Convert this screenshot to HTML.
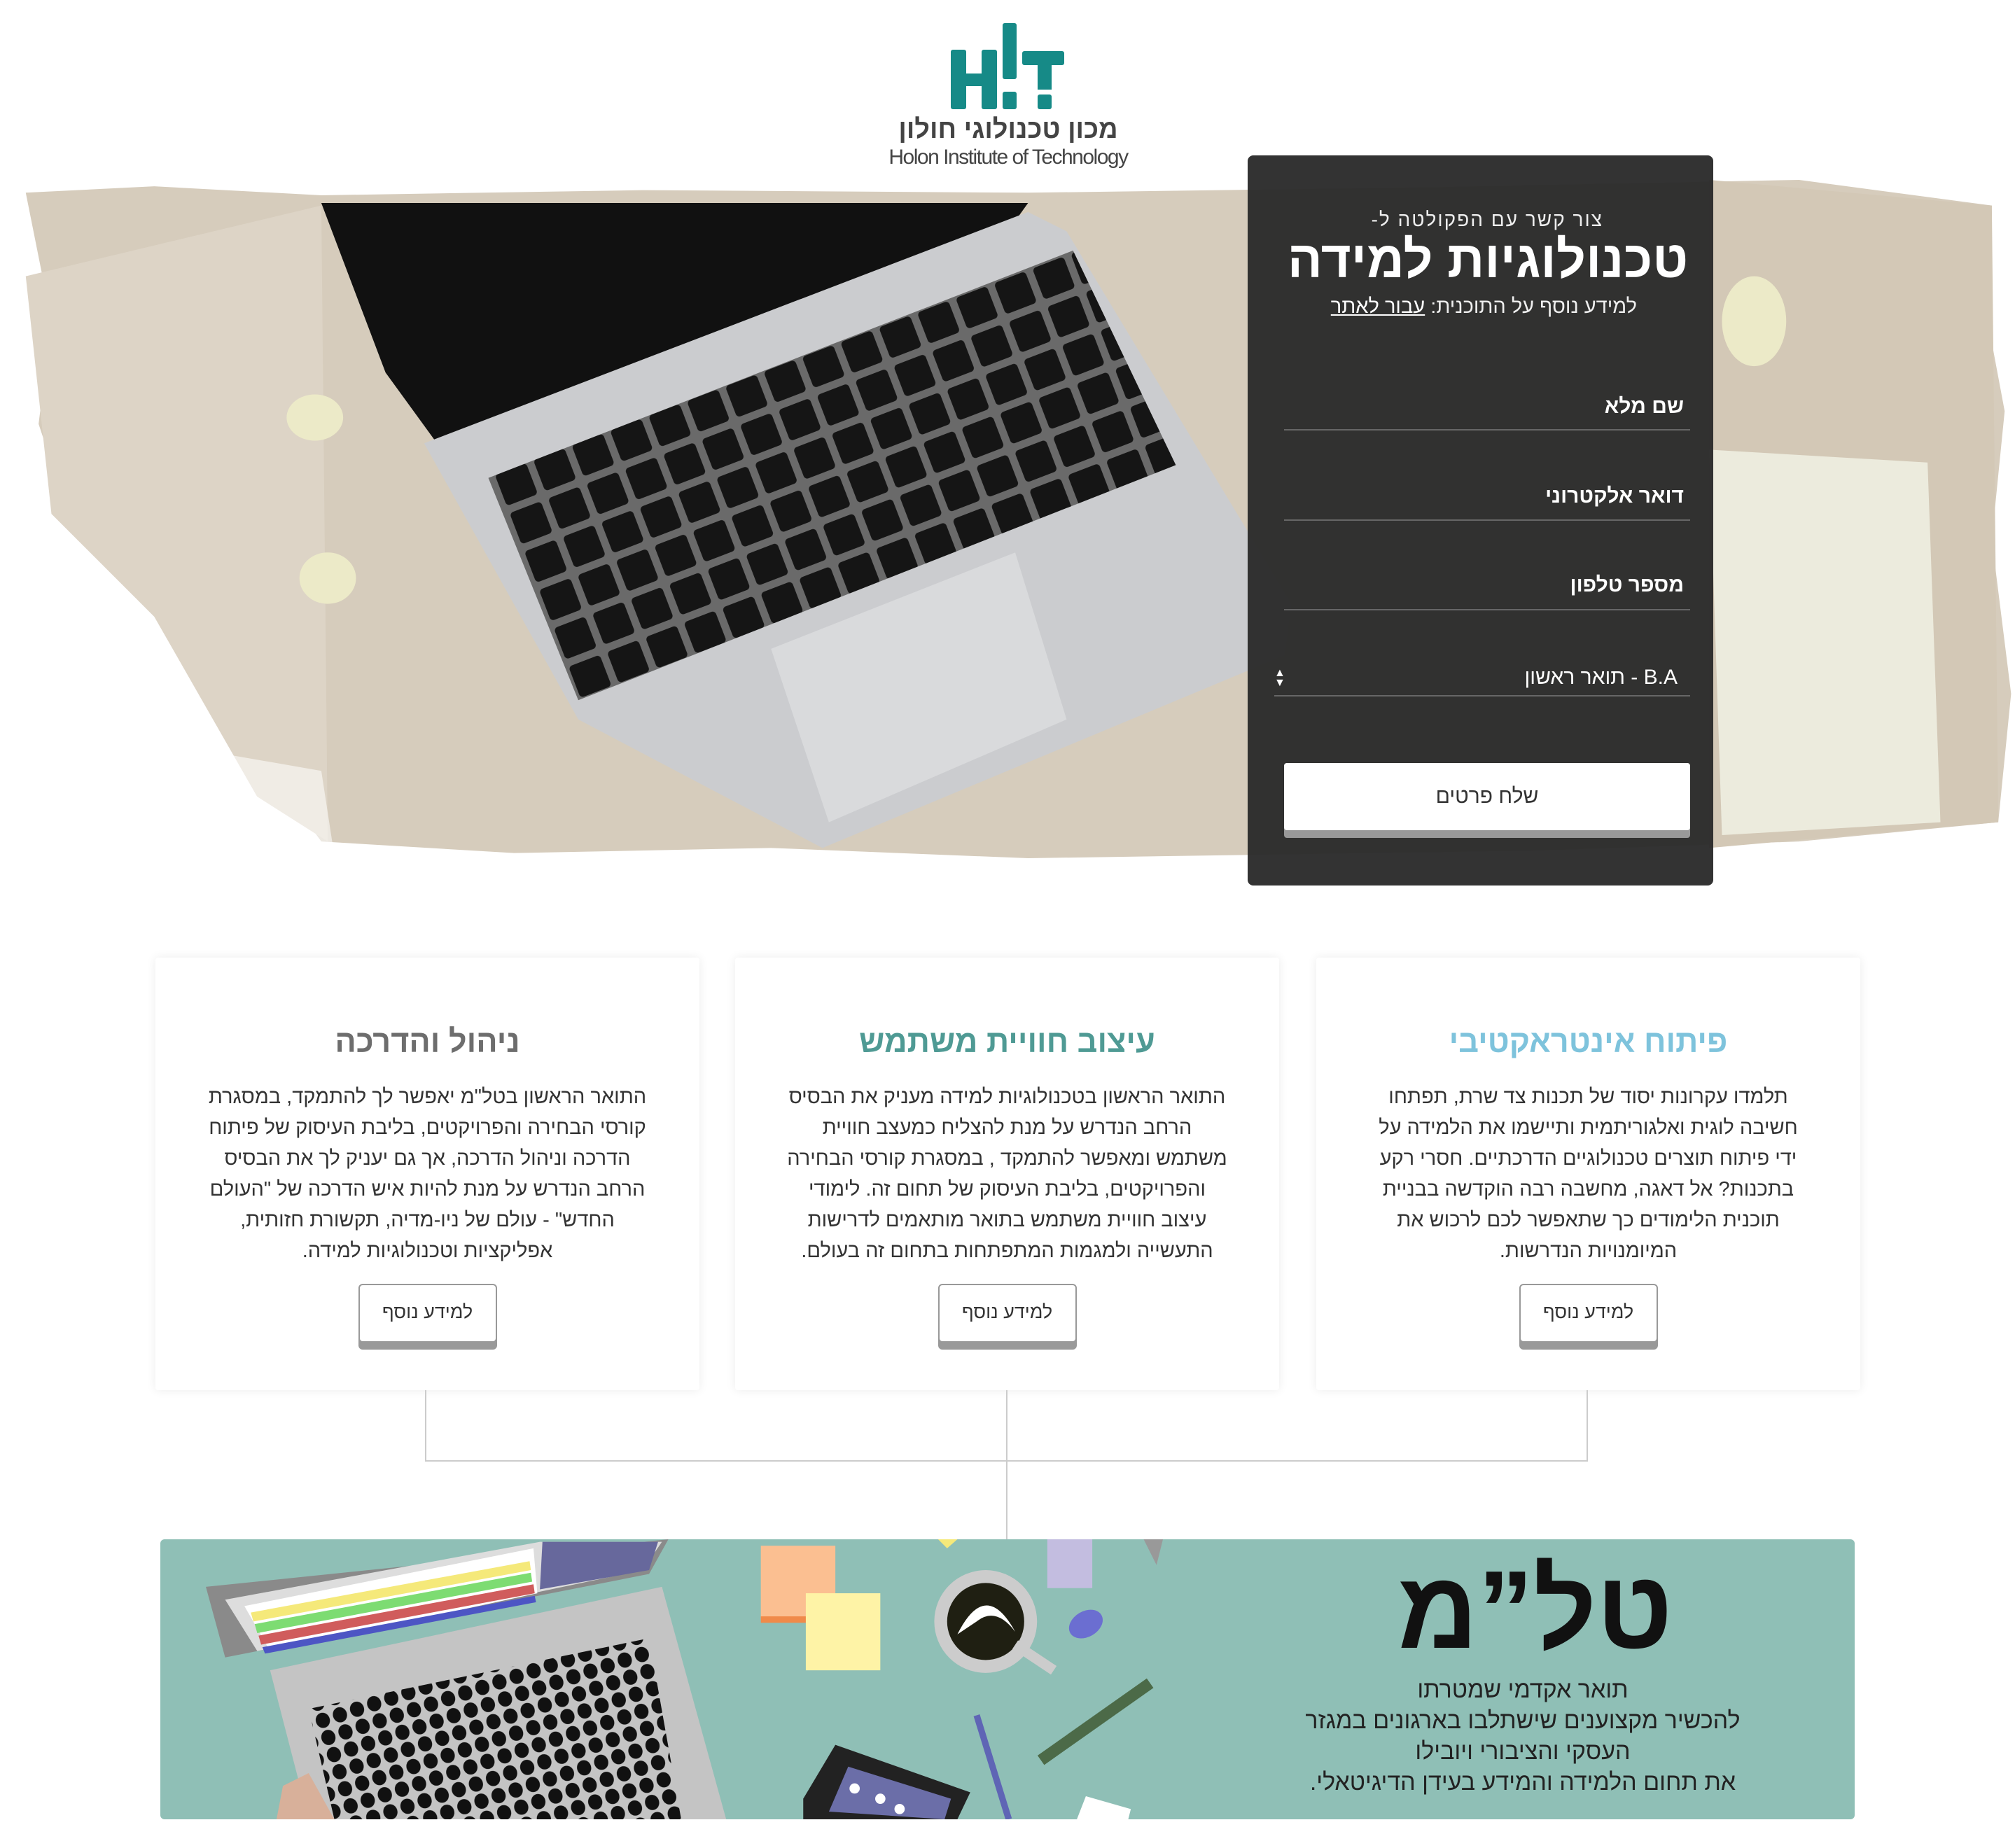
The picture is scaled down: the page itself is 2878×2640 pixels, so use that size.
<!DOCTYPE html>
<html lang="he" dir="rtl"><head><meta charset="utf-8">
<style>
*{margin:0;padding:0;box-sizing:border-box}
html,body{width:2878px;height:2640px;background:#fff;overflow:hidden}
body{position:relative;font-family:"Liberation Sans","DejaVu Sans",sans-serif;color:#333}
.abs{position:absolute}
.card{position:absolute;top:1368px;width:777px;height:618px;background:#fff;box-shadow:0 0 14px rgba(0,0,0,.08);border-radius:4px;text-align:center}
.card h2{position:absolute;top:94px;left:0;right:0;font-size:45px;font-weight:bold}
.card p{position:absolute;top:177px;left:0;right:0;font-size:29px;line-height:44px;color:#333}
.btn{position:absolute;top:466px;left:50%;margin-left:-99px;width:198px;height:84px;border:2px solid #999;border-radius:6px;background:#fff;box-shadow:0 10px 0 #999;font-size:27px;line-height:76px;color:#333}
.lbl{position:absolute;right:473px;font-size:30px;color:#fff;font-weight:bold}
.ln{position:absolute;left:1834px;width:580px;height:2px;background:#666}
.bt{position:absolute;font-size:34px;color:#222;text-align:center;width:900px;left:1725px}
</style></head><body>

<svg class="abs" style="left:0;top:0" width="2878" height="2640" viewBox="0 0 1568 1438.4">
<defs>
<pattern id="keys" width="32" height="32" patternUnits="userSpaceOnUse" patternTransform="rotate(-21)">
<rect width="32" height="32" fill="#6a6a6a"/><rect x="3" y="3" width="26" height="26" rx="3" fill="#151515"/>
</pattern>
</defs>
<path d="M20 150 L120 145 L250 152 L500 148 L800 150 L1100 146 L1400 140 L1550 160 L1545 240 L1560 320 L1550 420 L1565 540 L1555 640 L1400 655 L1200 662 L1000 665 L800 668 L600 660 L400 664 L250 655 L210 600 L180 520 L120 470 L60 420 L30 330 L40 250 Z" fill="#d6ccbc"/>
<path d="M20 215 L250 160 L255 655 L200 620 L120 480 L40 400 Z" fill="#ddd4c6"/>
<path d="M1330 140 L1550 160 L1555 640 L1330 660 Z" fill="#d3c8b6"/>
<path d="M250 158 L800 158 L790 172 L340 345 L300 290 Z" fill="#111"/>
<path d="M330 345 L800 165 L830 180 L1005 470 L1000 510 L640 660 L450 560 Z" fill="#cbcccf"/>
<path d="M380 372 L835 195 L915 362 L450 545 Z" fill="url(#keys)"/>
<path d="M600 505 L790 430 L830 560 L645 640 Z" fill="#d9dadc"/>
<path d="M1330 350 L1500 360 L1510 640 L1340 650 Z" fill="#ecebdd"/>
<ellipse cx="245" cy="325" rx="22" ry="18" fill="#eceac8"/>
<ellipse cx="255" cy="450" rx="22" ry="20" fill="#eceac8"/>
<ellipse cx="1365" cy="250" rx="25" ry="35" fill="#eceac8"/>
<path d="M20 560 L250 600 L260 665 L150 640 Z" fill="#fff" opacity=".55"/>
</svg>

<div class="abs" style="left:1358px;top:33px;width:162px;height:123px">
<svg width="162" height="123" viewBox="0 0 162 123">
<rect x="0" y="38" width="22" height="85" rx="3" fill="#168a87"/>
<rect x="44" y="38" width="22" height="85" rx="3" fill="#168a87"/>
<rect x="0" y="72" width="66" height="18" fill="#168a87"/>
<rect x="74" y="0" width="20" height="80" rx="3" fill="#168a87"/>
<rect x="74" y="98" width="20" height="25" rx="3" fill="#168a87"/>
<rect x="102" y="40" width="60" height="20" rx="3" fill="#168a87"/>
<rect x="124" y="40" width="20" height="55" fill="#168a87"/>
<rect x="124" y="102" width="20" height="21" rx="3" fill="#168a87"/>
</svg></div>
<div class="abs" style="left:1270px;top:164px;width:340px;text-align:center;font-size:38px;font-weight:bold;color:#444">מכון טכנולוגי חולון</div>
<div class="abs" dir="ltr" style="left:1220px;top:208px;width:440px;text-align:center;font-size:30px;color:#444;letter-spacing:-1.5px;white-space:nowrap">Holon Institute of Technology</div>

<div class="abs" style="left:1782px;top:222px;width:665px;height:1043px;background:rgba(40,40,40,.95);border-radius:8px"></div>
<div class="abs" style="left:1900px;top:298px;width:390px;font-size:28px;color:#eee;text-align:right;letter-spacing:2px;white-space:nowrap">צור קשר עם הפקולטה ל-</div>
<div class="abs" style="left:1810px;top:328px;width:630px;text-align:center;font-size:74px;font-weight:bold;color:#fff">טכנולוגיות למידה</div>
<div class="abs" style="left:1782px;top:422px;width:556px;text-align:right;font-size:29px;color:#eee">למידע נוסף על התוכנית: <span style="text-decoration:underline;color:#fff">עבור לאתר</span></div>
<div class="lbl" style="top:564px">שם מלא</div><div class="ln" style="top:613px"></div>
<div class="lbl" style="top:692px">דואר אלקטרוני</div><div class="ln" style="top:742px"></div>
<div class="lbl" style="top:819px">מספר טלפון</div><div class="ln" style="top:870px"></div>
<div class="lbl" style="top:951px;right:482px;font-weight:normal">B.A - תואר ראשון</div>
<div class="abs" style="left:1820px;top:955px;font-size:16px;color:#fff;line-height:14px">▲<br>▼</div>
<div class="ln" style="top:993px;left:1820px;width:594px"></div>
<div class="abs" style="left:1834px;top:1090px;width:580px;height:96px;background:#fff;border-radius:4px;box-shadow:0 11px 0 #999;text-align:center;font-size:30px;line-height:96px;color:#333">שלח פרטים</div>

<div class="card" style="left:222px"><h2 style="color:#6d6d6d">ניהול והדרכה</h2>
<p>התואר הראשון בטל"מ יאפשר לך להתמקד, במסגרת<br>קורסי הבחירה והפרויקטים, בליבת העיסוק של פיתוח<br>הדרכה וניהול הדרכה, אך גם יעניק לך את הבסיס<br>הרחב הנדרש על מנת להיות איש הדרכה של "העולם<br>החדש" - עולם של ניו-מדיה, תקשורת חזותית,<br>אפליקציות וטכנולוגיות למידה.</p><div class="btn">למידע נוסף</div></div>
<div class="card" style="left:1050px"><h2 style="color:#4f9a94">עיצוב חוויית משתמש</h2>
<p>התואר הראשון בטכנולוגיות למידה מעניק את הבסיס<br>הרחב הנדרש על מנת להצליח כמעצב חוויית<br>משתמש ומאפשר להתמקד , במסגרת קורסי הבחירה<br>והפרויקטים, בליבת העיסוק של תחום זה. לימודי<br>עיצוב חוויית משתמש בתואר מותאמים לדרישות<br>התעשייה ולמגמות המתפתחות בתחום זה בעולם.</p><div class="btn">למידע נוסף</div></div>
<div class="card" style="left:1880px"><h2 style="color:#7ec3dc">פיתוח אינטראקטיבי</h2>
<p>תלמדו עקרונות יסוד של תכנות צד שרת, תפתחו<br>חשיבה לוגית ואלגוריתמית ותיישמו את הלמידה על<br>ידי פיתוח תוצרים טכנולוגיים הדרכתיים. חסרי רקע<br>בתכנות? אל דאגה, מחשבה רבה הוקדשה בבניית<br>תוכנית הלימודים כך שתאפשר לכם לרכוש את<br>המיומנויות הנדרשות.</p><div class="btn">למידע נוסף</div></div>

<div class="abs" style="left:607px;top:1986px;width:2px;height:102px;background:#ccc"></div>
<div class="abs" style="left:1437px;top:1986px;width:2px;height:213px;background:#ccc"></div>
<div class="abs" style="left:2266px;top:1986px;width:2px;height:102px;background:#ccc"></div>
<div class="abs" style="left:607px;top:2086px;width:1661px;height:2px;background:#ccc"></div>

<div class="abs" style="left:229px;top:2199px;width:2420px;height:400px;background:#8fbfb6;border-radius:6px;overflow:hidden">
<svg width="2420" height="400" viewBox="125 1198 1318 218">
<defs><pattern id="bk" width="14" height="14" patternUnits="userSpaceOnUse" patternTransform="rotate(-18)"><rect width="14" height="14" fill="#c4c4c4"/><ellipse cx="7" cy="7" rx="5.5" ry="6" fill="#111"/></pattern></defs>
<path d="M160 1235 L520 1198 L505 1225 L175 1290 Z" fill="#8a8a8a"/>
<path d="M175 1245 L420 1200 L515 1200 L500 1222 L200 1285 Z" fill="#ddd"/>
<path d="M190 1250 L415 1205 L418 1240 L210 1285 Z" fill="#fff"/>
<path d="M195 1255 L412 1215 L413 1222 L197 1262 Z" fill="#f5e97a"/>
<path d="M198 1264 L413 1224 L414 1231 L200 1271 Z" fill="#7ddc72"/>
<path d="M201 1273 L415 1233 L416 1240 L203 1280 Z" fill="#d05c5c"/>
<path d="M204 1282 L416 1242 L417 1247 L206 1287 Z" fill="#4d55c4"/>
<path d="M422 1200 L512 1200 L505 1222 L420 1237 Z" fill="#67689c"/>
<path d="M210 1300 L515 1235 L565 1416 L240 1416 Z" fill="#c4c4c4"/>
<path d="M240 1330 L505 1275 L530 1416 L260 1416 Z" fill="url(#bk)"/>
<path d="M220 1390 L240 1380 L260 1416 L215 1416 Z" fill="#d8b09a"/>
<rect x="592" y="1203" width="58" height="58" fill="#fbbf91"/>
<rect x="592" y="1258" width="58" height="5" fill="#f08a4a"/>
<rect x="627" y="1240" width="58" height="60" fill="#fef3a6"/>
<rect x="815" y="1198" width="35" height="38" fill="#c3bde0"/>
<circle cx="767" cy="1262" r="40" fill="#ccc"/>
<circle cx="767" cy="1262" r="30" fill="#1f1f12"/>
<path d="M745 1272 Q767 1228 790 1270 Q775 1250 760 1262 Z" fill="#fff"/>
<path d="M790 1280 L820 1300" stroke="#ccc" stroke-width="8"/>
<ellipse cx="845" cy="1264" rx="14" ry="10" fill="#6b6ed1" transform="rotate(-30 845 1264)"/>
<path d="M810 1370 L895 1310" stroke="#4c6a48" stroke-width="9"/>
<path d="M760 1335 L785 1416" stroke="#5f65b5" stroke-width="5"/>
<path d="M625 1400 L650 1358 L755 1395 L745 1416 L625 1416 Z" fill="#222"/>
<path d="M645 1410 L660 1375 L740 1400 L735 1416 Z" fill="#6b6ea8"/>
<circle cx="665" cy="1392" r="4" fill="#fff"/><circle cx="685" cy="1400" r="4" fill="#fff"/><circle cx="700" cy="1408" r="4" fill="#fff"/>
<path d="M838 1416 L845 1398 L880 1408 L878 1416 Z" fill="#fff"/>
<path d="M730 1198 L745 1198 L737 1205 Z" fill="#f5e97a"/>
<path d="M890 1198 L905 1198 L900 1218 Z" fill="#999"/>
</svg>
<div class="abs" style="left:1780px;top:22px;font-size:158px;font-weight:bold;color:#111;line-height:158px;width:380px;text-align:center">טל”מ</div>
</div>
<div class="bt" style="top:2395px">תואר אקדמי שמטרתו</div>
<div class="bt" style="top:2439px">להכשיר מקצוענים שישתלבו בארגונים במגזר</div>
<div class="bt" style="top:2483px">העסקי והציבורי ויובילו</div>
<div class="bt" style="top:2527px">את תחום הלמידה והמידע בעידן הדיגיטאלי.</div>
</body></html>
